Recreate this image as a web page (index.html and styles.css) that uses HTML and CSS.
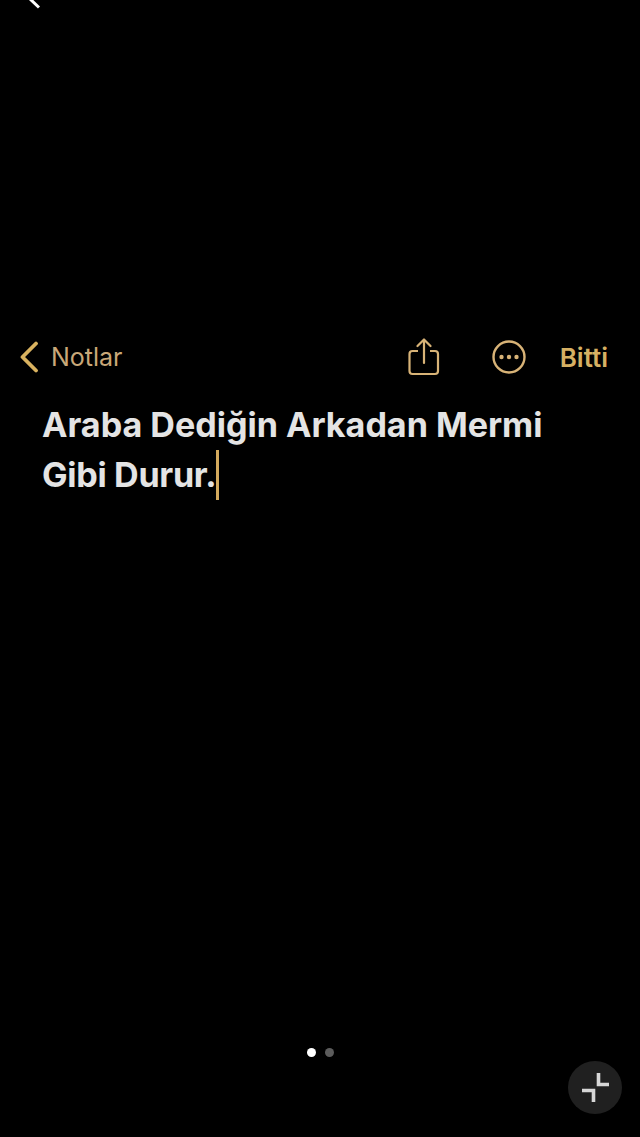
FILE: index.html
```html
<!DOCTYPE html>
<html lang="tr">
<head>
  <meta charset="UTF-8">
  <meta name="viewport" content="width=device-width, initial-scale=1">
  <title>Notlar</title>
  <link rel="stylesheet" href="styles.css">
</head>
<body>

  <!-- edge of the back arrow from the video player, cut off by the top of the frame -->
  <svg class="top-mark" width="20" height="12" viewBox="0 0 20 12">
    <path d="M8 -3 L19 7.5" fill="none" stroke="#fff" stroke-width="3"/>
  </svg>

  <main class="phone">
    <nav class="toolbar">
      <a class="back">
        <svg width="22" height="32" viewBox="0 0 22 32">
          <path d="M17 2.5 L3.5 16 L17 29.5" fill="none" stroke="#d9b25f" stroke-width="3.8" stroke-linecap="round" stroke-linejoin="round"/>
        </svg>
        <span>Notlar</span>
      </a>
      <div class="actions">
        <svg class="share" width="32" height="38" viewBox="0 0 32 38">
          <path d="M10 13 H4.5 Q1.5 13 1.5 16 V33 Q1.5 36 4.5 36 H27 Q30 36 30 33 V16 Q30 13 27 13 H22" fill="none" stroke="#d8b377" stroke-width="2.2"/>
          <path d="M16 25 V2 M9.5 8 L16 1.5 L22.5 8" fill="none" stroke="#d8b377" stroke-width="2.2" stroke-linecap="round" stroke-linejoin="round"/>
        </svg>
        <svg class="more" width="36" height="36" viewBox="0 0 36 36">
          <circle cx="18" cy="18" r="15.5" fill="none" stroke="#d8b377" stroke-width="2.4"/>
          <circle cx="10.5" cy="18" r="2.2" fill="#d8b377"/>
          <circle cx="18" cy="18" r="2.2" fill="#d8b377"/>
          <circle cx="25.5" cy="18" r="2.2" fill="#d8b377"/>
        </svg>
        <span class="done">Bitti</span>
      </div>
    </nav>

    <p class="note">Araba Dediğin Arkadan Mermi <span class="tight">Gibi Durur.</span><span class="caret"></span></p>

    <div class="pager">
      <span class="dot active"></span>
      <span class="dot"></span>
    </div>

    <div class="footer">
      <button class="fab">
        <svg width="30" height="30" viewBox="0 0 30 30">
          <path d="M18.5 0 V11.5 H29 M2 17.5 H13.5 V29" fill="none" stroke="#d6d6d6" stroke-width="3.6"/>
        </svg>
      </button>
    </div>
  </main>

</body>
</html>
```

FILE: styles.css
```css
html, body {
  margin: 0;
  height: 100%;
  background: #000;
}
body {
  font-family: Inter, "Liberation Sans", sans-serif;
  overflow: hidden;
}
.top-mark {
  position: absolute;
  top: 0;
  left: 20px;
}
.phone {
  height: 1137px;
  box-sizing: border-box;
  padding-top: 338px;
  display: flex;
  flex-direction: column;
}
.toolbar {
  height: 38px;
  padding: 0 32px 0 19px;
  display: flex;
  align-items: center;
  justify-content: space-between;
}
.back {
  display: flex;
  align-items: center;
  gap: 10px;
  color: #c9a878;
  font-size: 25px;
}
.actions {
  display: flex;
  align-items: center;
  color: #d6b063;
}
.share {
  margin-right: 51px;
}
.more {
  margin-right: 33px;
}
.done {
  font-size: 26px;
  font-weight: 600;
}
.note {
  margin: 24px 60px 0 42px;
  color: #e4e4e4;
  font-size: 34.1px;
  font-weight: 700;
  line-height: 50px;
}
.tight {
  letter-spacing: -0.3px;
}
.caret {
  display: inline-block;
  width: 3px;
  height: 50px;
  margin-left: 0;
  background: #d4a95c;
  vertical-align: top;
}
.pager {
  margin-top: auto;
  display: flex;
  justify-content: center;
  align-items: center;
  gap: 9px;
}
.dot {
  width: 9px;
  height: 9px;
  border-radius: 50%;
  background: #5c5c5c;
}
.dot.active {
  background: #fff;
}
.footer {
  margin-top: 4px;
  padding: 0 18px 23px 0;
  display: flex;
  justify-content: flex-end;
}
.fab {
  width: 54px;
  height: 53px;
  padding: 0;
  border: none;
  border-radius: 50%;
  background: #202020;
  display: flex;
  align-items: center;
  justify-content: center;
}
```
